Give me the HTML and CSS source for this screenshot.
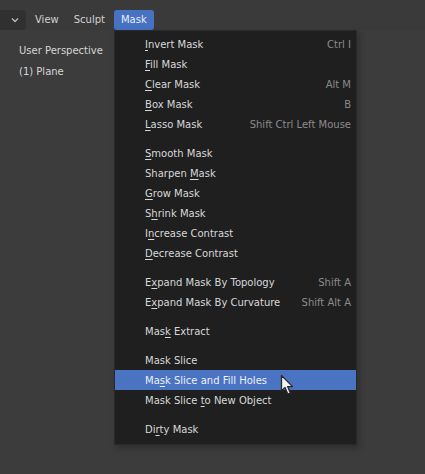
FILE: index.html
```html
<!DOCTYPE html>
<html>
<head>
<meta charset="utf-8">
<link rel="stylesheet" href="styles.css">
</head>
<body>
<div class="screen">
  <div class="header">
    <div class="mode">
      <svg width="8" height="6" viewBox="0 0 8 6"><path d="M1 1.5 L4 4.5 L7 1.5" fill="none" stroke="#b8b8b8" stroke-width="1.4"/></svg>
    </div>
    <div class="hitem">View</div>
    <div class="hitem">Sculpt</div>
    <div class="hitem active">Mask</div>
  </div>
  <div class="viewport">
    <div class="info">
      <div>User Perspective</div>
      <div>(1) Plane</div>
    </div>
  </div>
  <div class="menu">
    <div class="row"><span><u>I</u>nvert Mask</span><span class="sc">Ctrl I</span></div>
    <div class="row"><span><u>F</u>ill Mask</span></div>
    <div class="row"><span><u>C</u>lear Mask</span><span class="sc">Alt M</span></div>
    <div class="row"><span><u>B</u>ox Mask</span><span class="sc">B</span></div>
    <div class="row"><span><u>L</u>asso Mask</span><span class="sc">Shift Ctrl Left Mouse</span></div>
    <div class="sep"></div>
    <div class="row"><span><u>S</u>mooth Mask</span></div>
    <div class="row"><span>Sharpen <u>M</u>ask</span></div>
    <div class="row"><span><u>G</u>row Mask</span></div>
    <div class="row"><span>S<u>h</u>rink Mask</span></div>
    <div class="row"><span>I<u>n</u>crease Contrast</span></div>
    <div class="row"><span><u>D</u>ecrease Contrast</span></div>
    <div class="sep"></div>
    <div class="row"><span>E<u>x</u>pand Mask By Topology</span><span class="sc">Shift A</span></div>
    <div class="row"><span>E<u>x</u>pand Mask By Curvature</span><span class="sc">Shift Alt A</span></div>
    <div class="sep"></div>
    <div class="row"><span>Mas<u>k</u> Extract</span></div>
    <div class="sep"></div>
    <div class="row"><span>Mask Slice</span></div>
    <div class="row hl"><span>Ma<u>s</u>k Slice and Fill Holes</span></div>
    <div class="row"><span>Mask Slice <u>t</u>o New Object</span></div>
    <div class="sep"></div>
    <div class="row"><span>Di<u>r</u>ty Mask</span></div>
    <svg class="cursor" width="14" height="22" viewBox="0 0 14 22">
      <path d="M1.5 1.5 L1.5 17 L5 13.5 L7.8 20 L10.3 19 L7.6 12.6 L12.5 12.6 Z" fill="#f2f2f2" stroke="#2a2a2a" stroke-width="1.3" stroke-linejoin="round"/>
    </svg>
  </div>
</div>
</body>
</html>
```
FILE: styles.css
```css
html, body {
  margin: 0;
  padding: 0;
  background: #3c3c3c;
}
.screen {
  position: relative;
  width: 425px;
  height: 474px;
  overflow: hidden;
  font-family: "DejaVu Sans", sans-serif;
  font-size: 10px;
  color: #d4d4d4;
}
.header {
  height: 30px;
  background: #3a3a3a;
  display: flex;
  align-items: flex-start;
  padding-top: 10px;
  box-sizing: border-box;
}
.mode {
  width: 26px;
  height: 20px;
  background: #303030;
  border-radius: 0 4px 4px 0;
  display: flex;
  align-items: center;
  justify-content: flex-end;
  padding-right: 7px;
  box-sizing: border-box;
  margin-right: 3px;
}
.hitem {
  height: 20px;
  line-height: 20px;
  padding: 0 6px;
  color: #d0d0d0;
  margin-right: 3px;
  border-radius: 3px;
}
.active {
  background: #4772c2;
  color: #e8eefa;
  padding: 0 7px;
}
.viewport {
  padding: 14px 0 0 19px;
}
.info div {
  height: 21px;
  line-height: 14px;
  color: #d6d6d6;
}
.menu {
  position: absolute;
  left: 114px;
  top: 30px;
  width: 243px;
  padding: 3px 0 5px;
  background: #1f1f20;
  border: 1px solid #2a2a2a;
  box-shadow: 2px 3px 6px rgba(0,0,0,0.25);
  box-sizing: border-box;
}
.row {
  height: 20px;
  display: flex;
  justify-content: space-between;
  align-items: center;
  padding: 0 5px 0 30px;
  color: #d8d8d8;
  white-space: nowrap;
}
.row u {
  text-decoration-thickness: 1px;
  text-underline-offset: 2px;
}
.sc {
  color: #8b8b8b;
}
.hl {
  background: #4a73c2;
  color: #eef2fb;
}
.sep {
  height: 9px;
}
.cursor {
  position: absolute;
  left: 165px;
  top: 343px;
}
```
